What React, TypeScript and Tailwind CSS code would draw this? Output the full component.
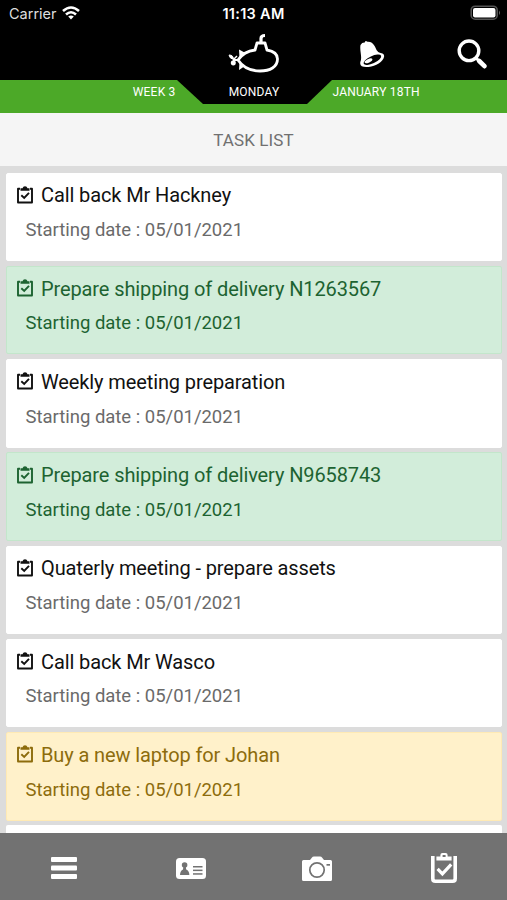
type Tone = 'plain' | 'green' | 'yellow';

const tasks: { title: string; tone: Tone }[] = [
  { title: 'Call back Mr Hackney', tone: 'plain' },
  { title: 'Prepare shipping of delivery N1263567', tone: 'green' },
  { title: 'Weekly meeting preparation', tone: 'plain' },
  { title: 'Prepare shipping of delivery N9658743', tone: 'green' },
  { title: 'Quaterly meeting - prepare assets', tone: 'plain' },
  { title: 'Call back Mr Wasco', tone: 'plain' },
  { title: 'Buy a new laptop for Johan', tone: 'yellow' },
];

const tones: Record<Tone, { card: string; title: string; date: string }> = {
  plain: { card: 'bg-white border-white', title: 'text-[#111111]', date: 'text-[#6a6a6a]' },
  green: { card: 'bg-[#d2edda] border-[#c3e6cb]', title: 'text-[#1d6331]', date: 'text-[#1d6331]' },
  yellow: { card: 'bg-[#fff1ca] border-[#ffeab4]', title: 'text-[#8d6c0c]', date: 'text-[#8d6c0c]' },
};

function ClipboardCheck({ className }: { className: string }) {
  return (
    <svg viewBox="0 0 26 30" className={className} fill="none" stroke="currentColor">
      <path d="M1.800 3v22.400q0 2.800 2.600 2.800h17.200q2.600 0 2.600-2.800V3" strokeWidth="3.600" />
      <path
        d="M5.400 3.400h4V2q0-2 2-2h3.200q2 0 2 2v1.400h4V7.400H5.400zM11.600 2v2h3V2z"
        fill="currentColor"
        fillRule="evenodd"
        stroke="none"
      />
      <path d="M6.600 15.800l4.800 5 8.800-9.400" strokeWidth="3.200" />
    </svg>
  );
}

function TaskIcon() {
  return (
    <svg viewBox="0 0 16 18" className="mt-[-1px] h-[18px] w-4" fill="none" stroke="currentColor">
      <path d="M3 2.700H1V16.500H15V2.700H13" strokeWidth="1.900" strokeLinejoin="round" />
      <path d="M3.500 2.200H5.500Q6 .3 8 .3T10.500 2.200H12.500V4.800H3.500z" fill="currentColor" stroke="none" />
      <path d="M4.300 9.300L7.200 12L12 6.800" strokeWidth="1.900" />
    </svg>
  );
}

function Submarine() {
  return (
    <svg viewBox="0 0 52 40" className="h-10 w-[52px]" fill="none" stroke="white" strokeLinejoin="round">
      <path
        d="M11 27C15 21 20 18 28 17L30 10H38L40 17C46 18 50.5 21 50.5 26C50.5 34 43 38 33 38C22 38 15 33 11 27Z"
        strokeWidth="2.8"
      />
      <path d="M34 10V5.500Q34 2.500 38 2.500" strokeWidth="3.200" />
      <path d="M12 16.500L18.500 20L12.500 25zM12.500 29L18 33L12 37z" fill="white" stroke="none" />
      <path d="M6 27H11" strokeWidth="2" />
      <path d="M2 22Q6.500 22 6.500 26.500Q2.500 25.500 2 22z" fill="white" strokeWidth="1" />
      <ellipse cx="6.300" cy="29.800" rx="2.500" ry="2.600" fill="white" stroke="none" />
      <path d="M7 26L10 23" strokeWidth="1.400" />
    </svg>
  );
}

function TaskCard({ title, tone }: { title: string; tone: Tone }) {
  const t = tones[tone];
  return (
    <li className={`h-[88.5px] shrink-0 rounded-[2px] border pl-[10px] ${t.card}`}>
      <div className={`flex h-[43.5px] items-center ${t.title}`}>
        <TaskIcon />
        <span className="ml-2 text-[20px] leading-6 tracking-[-0.11px] whitespace-nowrap">{title}</span>
      </div>
      <p className={`mt-[1px] pl-[8.5px] text-[18.5px] leading-6 tracking-[-0.02px] whitespace-nowrap ${t.date}`}>
        Starting date : 05/01/2021
      </p>
    </li>
  );
}

export default function App() {
  return (
    <div className="flex h-[900px] w-[507px] flex-col overflow-hidden bg-[#dcdcdc] font-[Roboto,sans-serif]">
      <header className="relative h-[113px] shrink-0 bg-[#4ca928] text-white">
        <div className="h-20 bg-black">
          <div className="grid h-7 grid-cols-3 items-center font-[Inter,sans-serif]">
            <div className="flex items-center pl-[9px]">
              <span className="text-[14.5px] leading-5 text-[#dedede]">Carrier</span>
              <svg viewBox="0 0 18 14" className="mt-[-2px] ml-[5px] h-[14px] w-[18px]" fill="none" stroke="white" strokeWidth="2.6">
                <path d="M1 5Q9-2 17 5M4 8.500Q9 4 14 8.500" />
                <path d="M6.200 10.600Q9 8.400 11.800 10.600L9 13.600z" fill="white" stroke="none" />
              </svg>
            </div>
            <span className="text-center text-[14.5px] leading-5 font-semibold tracking-[0.3px]">11:13 AM</span>
            <svg viewBox="0 0 31 16" className="mt-[-2px] mr-[6px] h-4 w-[31px] justify-self-end">
              <rect x="1.200" y="1.200" width="26" height="13" rx="4" fill="black" stroke="#555" strokeWidth="1.600" />
              <rect x="3" y="3" width="22.500" height="9.600" rx="2" fill="white" />
              <path d="M29 5.500q2 2.300 0 4.600z" fill="#666" />
            </svg>
          </div>
          <div className="flex h-[52px] pl-[227px]">
            <div className="mt-[5px]">
              <Submarine />
            </div>
            <svg viewBox="0 0 26 28" className="mt-[12px] ml-[80px] h-7 w-[26px]">
              <path
                d="M1.500 5Q3 2.400 5.800 2.600Q6-.2 8.500 1.800Q13 1.400 15.600 6C18 10.600 18 12.500 23.500 13.500Q26.200 15 24.500 18.400C21.500 24.500 9 29 2.800 26.300Q.2 24.600 1.800 20.500C3 16 .5 10 1.500 5Z"
                fill="white"
              />
              <ellipse cx="13.400" cy="19.800" rx="9.600" ry="3.600" transform="rotate(-25 13.400 19.800)" fill="black" />
              <ellipse cx="9.500" cy="20.800" rx="4.200" ry="1.800" transform="rotate(-25 9.500 20.800)" fill="white" />
            </svg>
            <svg viewBox="0 0 31 31" className="mt-[11px] ml-[72px] h-[31px] w-[31px]" fill="none" stroke="white">
              <circle cx="12" cy="11.800" r="9.800" strokeWidth="3.400" />
              <path d="M18.800 18.800L22 22" strokeWidth="3" />
              <path d="M22.200 22L27.500 27.200" strokeWidth="4.600" strokeLinecap="round" />
            </svg>
          </div>
        </div>
        <svg viewBox="0 0 155 24" className="absolute top-[79.5px] left-[177px] h-6 w-[155px]">
          <path d="M0 0H155L130 24H26z" fill="black" />
        </svg>
        <div className="relative grid h-6 grid-cols-[175.5px_157px_1fr] text-[12px] leading-[24px] tracking-[0.2px] whitespace-nowrap">
          <span className="text-right">WEEK 3</span>
          <span className="text-center">MONDAY</span>
          <span>JANUARY 18TH</span>
        </div>
      </header>

      <h1 className="flex h-[53px] shrink-0 items-center justify-center bg-[#f5f5f5] pt-[2px] text-[17px] tracking-[0.1px] text-[#707070]">
        TASK LIST
      </h1>

      <ul className="flex min-h-0 flex-1 flex-col gap-[4.75px] overflow-hidden pt-[6.5px] pr-[5px] pl-[6px]">
        {tasks.map((task) => (
          <TaskCard key={task.title} title={task.title} tone={task.tone} />
        ))}
        <li className="h-[88.5px] shrink-0 rounded-[2px] bg-white" />
      </ul>

      <nav className="grid h-[67px] shrink-0 grid-cols-4 bg-[#727272] pt-[20px] text-white">
        <svg viewBox="0 0 26 22" className="mt-[4px] ml-[2px] h-[22px] w-[26px] justify-self-center" fill="white">
          <rect width="26" height="5" y="0" rx="1" />
          <rect width="26" height="5" y="8.500" rx="1" />
          <rect width="26" height="5" y="17" rx="1" />
        </svg>
        <svg viewBox="0 0 30 21" className="mt-[5px] ml-[1px] h-[21px] w-[30px] justify-self-center">
          <rect width="30" height="21" rx="3.500" fill="white" />
          <g fill="#727272">
            <circle cx="8.600" cy="7" r="2.800" />
            <path d="M7.400 8.500h2.400l.4 3q3 1 3.200 5.500H4q.2-4.500 3-5.500z" />
            <rect x="17" y="8" width="9.500" height="1.500" />
            <rect x="17" y="11.600" width="9.500" height="1.500" />
            <rect x="17" y="15.200" width="9.500" height="1.500" />
          </g>
        </svg>
        <svg viewBox="0 0 30 25" className="mt-[3px] h-[25px] w-[30px] justify-self-center">
          <path d="M1.500 4H8L10 1.500Q10.500.5 12 .5H18Q19.500.5 20 1.500L22 4H28.500Q30 4 30 5.500V23.500Q30 25 28.500 25H1.500Q0 25 0 23.500V5.500Q0 4 1.500 4Z" fill="white" />
          <circle cx="15" cy="14" r="7.200" fill="none" stroke="#727272" strokeWidth="1.700" />
          <rect x="24.500" y="8" width="3.500" height="1.700" fill="#727272" />
        </svg>
        <ClipboardCheck className="mt-[-0.5px] h-[30px] w-[26px] justify-self-center" />
      </nav>
    </div>
  );
}
